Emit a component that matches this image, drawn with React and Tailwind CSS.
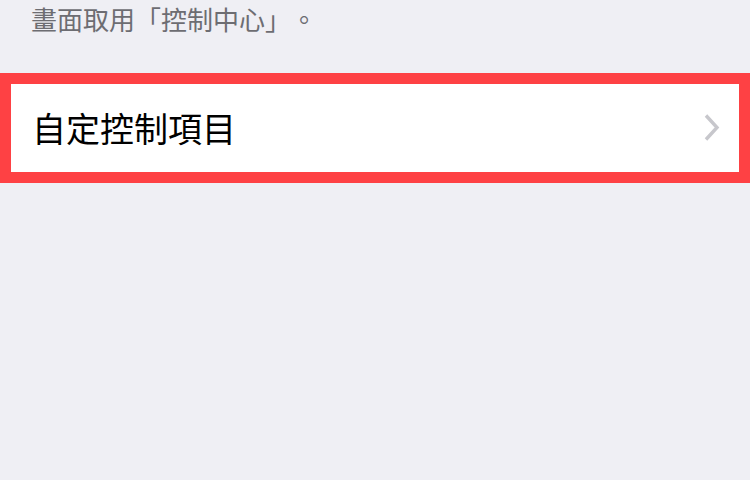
export default function App() {
  return (
    <div
      className="w-[750px] h-[480px] bg-[#efeff4] overflow-hidden"
      style={{ fontFamily: '"Noto Sans CJK TC", "Noto Sans", sans-serif' }}
    >
      <div className="h-[73px] px-[31px] pt-[2px]">
        <p className="text-[26px] leading-[34px] text-[#6d6d72] [text-spacing-trim:space-all]">畫面取用「控制中心」。</p>
      </div>
      <div className="border-[11px] border-[#fe4144] bg-white h-[110px] flex items-center pl-[21px] pr-[17px]">
        <span className="flex-1 text-[34px] leading-[40px] text-black">自定控制項目</span>
        <svg width="20" height="30" viewBox="0 0 20 30" className="shrink-0">
          <path d="M4 2.5 L15 14.5 L4 26.5" fill="none" stroke="#c7c7cc" strokeWidth="3.4" />
        </svg>
      </div>
    </div>
  );
}
